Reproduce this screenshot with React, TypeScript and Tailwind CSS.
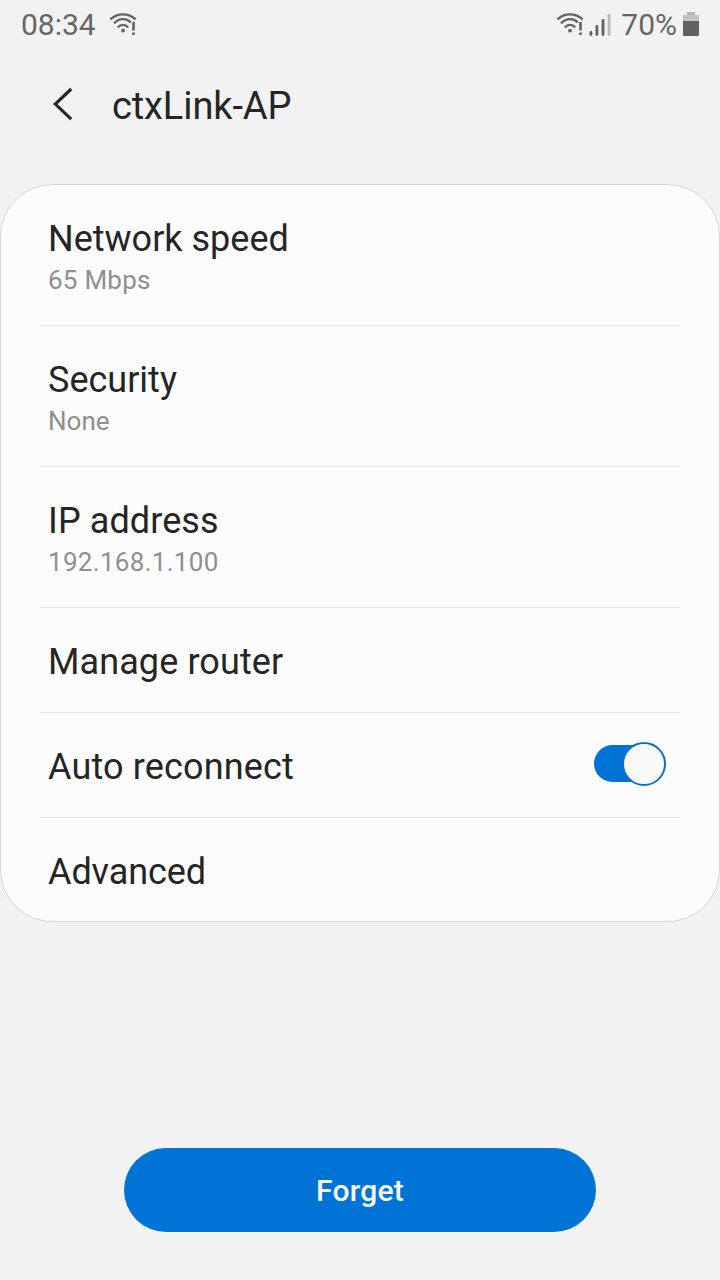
import React from "react";

type RowProps = {
  title: string;
  detail?: string;
  last?: boolean;
  titleClass?: string;
  detailClass?: string;
  children?: React.ReactNode;
};

function Row({ title, detail, last, titleClass = "", detailClass = "", children }: RowProps) {
  return (
    <div
      className={`flex justify-between px-2 pt-[30px] ${detail ? "h-[141px]" : "h-[105px]"} ${
        last ? "" : "border-b border-[#e6e6e6]"
      }`}
    >
      <div>
        <div className={`text-[36px] leading-[48px] text-[#252525] ${titleClass}`}>{title}</div>
        {detail && (
          <div className={`text-[26px] leading-[35px] text-[#8f8f8f] ${detailClass}`}>{detail}</div>
        )}
      </div>
      {children}
    </div>
  );
}

function Toggle() {
  return (
    <button
      role="switch"
      aria-checked="true"
      aria-label="Auto reconnect"
      className="mr-[6px] -mt-[1px] flex h-[44px] w-[72px] items-center"
    >
      <span className="-mt-px flex h-[37px] w-[68px] items-center rounded-full bg-[#0074d6] pl-[28px]">
        <span className="mt-px h-[44px] w-[44px] shrink-0 rounded-full border-2 border-[#0b70c8] bg-[#fafafa]" />
      </span>
    </button>
  );
}

function Wifi() {
  return (
    <svg width="28" height="48" viewBox="0 0 28 48" fill="none" stroke="#636363" strokeWidth="2.3">
      <path d="M1.4 19.3C8.4 12.6 19.6 12.6 26.6 19.3M5 23.4C10.2 18 17.4 18 21.8 22.4M8.8 27.4C11.6 24.1 16.4 24.1 19.2 27.4" />
      <circle cx="14" cy="30.7" r="1.9" fill="#636363" stroke="none" />
      <path d="M24.5 22V30.6M24.5 32.4V34.9" strokeWidth="2.6" />
    </svg>
  );
}

function Signal() {
  return (
    <svg width="22" height="48" viewBox="0 0 22 48" fill="none" strokeWidth="2.9" strokeLinecap="round">
      <path d="M1.9 32.4V34.5M7.9 26.4V34.5M14 20.4V34.5" stroke="#636363" />
      <path d="M20.1 15.2V34.5" stroke="#bdbdbd" />
    </svg>
  );
}

function Battery() {
  return (
    <svg width="16" height="48" viewBox="0 0 16 48">
      <path d="M4 12h8v3H4z" fill="#b3b3b3" />
      <path d="M0 15h16v6H0z" fill="#c2c2c2" />
      <path d="M0 21h16v14.3l-.7.7H.7L0 35.3z" fill="#616161" />
    </svg>
  );
}

export default function App() {
  return (
    <div className="flex h-[1280px] w-[720px] flex-col bg-[#f2f2f2] font-[Roboto,sans-serif]">
      <header className="flex h-[48px] items-center justify-between pl-[21px] pr-[21px] text-[30px] text-[#666]">
        <div className="flex items-center gap-[13px]">
          <span>08:34</span>
          <Wifi />
        </div>
        <div className="flex items-center">
          <Wifi />
          <span className="ml-[5px] flex">
            <Signal />
          </span>
          <span className="ml-[10px] mr-[6px]">70%</span>
          <Battery />
        </div>
      </header>
      <div className="flex h-[136px] items-start pl-[52px] pt-[34px]">
        <svg width="22" height="44" viewBox="0 0 22 44" fill="none" stroke="#252525" strokeWidth="3.1">
          <path d="M19.2 7L3.3 22l15.9 15.1" />
        </svg>
        <h1 className="pl-[38px] text-[38px] leading-[48px] tracking-[-0.1px] text-[#252525]">ctxLink-AP</h1>
      </div>
      <main className="h-[738px] rounded-[52px] border border-[#d6d6d6] bg-[#fcfcfc] px-[39px]">
        <Row title="Network speed" detail="65 Mbps" detailClass="tracking-[0.25px]" />
        <Row title="Security" detail="None" />
        <Row
          title="IP address"
          detail="192.168.1.100"
          titleClass="tracking-[0.1px]"
          detailClass="tracking-[0.3px]"
        />
        <Row title="Manage router" titleClass="tracking-[0.1px]" />
        <Row title="Auto reconnect" titleClass="tracking-[0.15px]">
          <Toggle />
        </Row>
        <Row title="Advanced" titleClass="tracking-[-0.1px]" last />
      </main>
      <button className="mx-auto mt-[226px] h-[84px] w-[472px] rounded-full bg-[#0074d6] text-[30px] font-medium tracking-[0.2px] text-[#fafafa]">
        Forget
      </button>
    </div>
  );
}
